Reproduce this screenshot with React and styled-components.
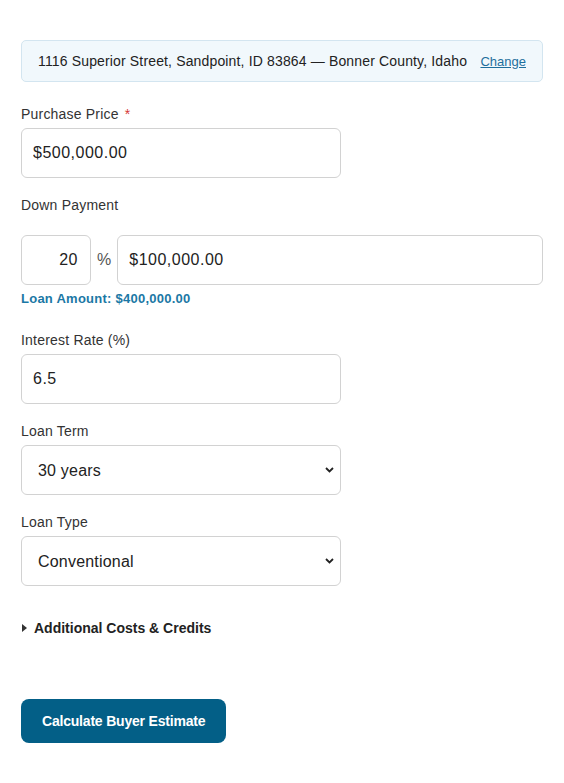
import React from 'react';
import styled, { createGlobalStyle } from 'styled-components';

const GlobalStyle = createGlobalStyle`
  body {
    margin: 0;
    background: #ffffff;
    font-family: 'Liberation Sans', Arial, sans-serif;
    color: #222222;
  }
`;

const Page = styled.div`
  padding: 40px 21px 40px 21px;
  width: 522px;
`;

const AddressBox = styled.div`
  display: flex;
  align-items: center;
  justify-content: space-between;
  height: 40px;
  padding: 0 16px;
  background: #f1f8fc;
  border: 1px solid #d3e5f0;
  border-radius: 5px;
  margin-bottom: 23px;
  font-size: 14px;
  letter-spacing: 0.15px;
  color: #222222;
`;

const ChangeLink = styled.a`
  font-size: 13px;
  letter-spacing: 0;
  color: #1f6f9d;
  text-decoration: underline;
  cursor: pointer;
`;

const Field = styled.div`
  margin-bottom: ${(p) => p.$after || 18}px;
`;

const Label = styled.div`
  font-size: 14px;
  line-height: 18px;
  letter-spacing: 0.2px;
  color: #333333;
  margin-bottom: ${(p) => p.$gap || 5}px;
`;

const Required = styled.span`
  color: #d63638;
  margin-left: 6px;
`;

const TextInput = styled.input`
  box-sizing: border-box;
  display: block;
  width: ${(p) => p.$width || '320px'};
  height: 50px;
  padding: 0 ${(p) => (p.$right ? '12px' : '11px')};
  border: 1px solid #d2d2d2;
  border-radius: 6px;
  font-family: inherit;
  font-size: 16px;
  letter-spacing: 0.5px;
  color: #222222;
  text-align: ${(p) => (p.$right ? 'right' : 'left')};
  background: #ffffff;
  outline: none;
`;

const PaymentRow = styled.div`
  display: flex;
  align-items: center;
  gap: 6px;

  & > input:last-child {
    flex: 1;
  }
`;

const Percent = styled.span`
  font-size: 16px;
  color: #555555;
`;

const LoanAmount = styled.div`
  margin-top: 6px;
  font-size: 13px;
  line-height: 15px;
  letter-spacing: 0.25px;
  font-weight: bold;
  color: #1b78a5;
`;

const SelectWrap = styled.div`
  position: relative;
  width: 320px;
`;

const Select = styled.select`
  box-sizing: border-box;
  display: block;
  width: 100%;
  height: 50px;
  padding: 0 16px;
  appearance: none;
  -webkit-appearance: none;
  border: 1px solid #d2d2d2;
  border-radius: 6px;
  background: #ffffff;
  font-family: inherit;
  font-size: 16px;
  letter-spacing: 0.2px;
  color: #222222;
  outline: none;
`;

const Chevron = styled.svg`
  position: absolute;
  right: 7px;
  top: 50%;
  width: 9px;
  height: 6px;
  margin-top: -3px;
  pointer-events: none;
`;

const Details = styled.details`
  margin-top: 33px;
  margin-bottom: 62px;
`;

const Summary = styled.summary`
  display: flex;
  align-items: center;
  list-style: none;
  font-size: 14px;
  line-height: 18px;
  font-weight: bold;
  color: #222222;
  cursor: pointer;

  &::-webkit-details-marker {
    display: none;
  }

  &::before {
    content: '';
    width: 0;
    height: 0;
    margin: 0 7px 0 1px;
    border-top: 4px solid transparent;
    border-bottom: 4px solid transparent;
    border-left: 5px solid #333333;
  }
`;

const SubmitButton = styled.button`
  height: 44px;
  padding: 0 21px;
  border: none;
  border-radius: 8px;
  background: #035f87;
  color: #ffffff;
  font-family: inherit;
  font-size: 14px;
  letter-spacing: -0.2px;
  font-weight: bold;
  cursor: pointer;
`;

const SelectField = ({ label, value, options }) => (
  <Field>
    <Label>{label}</Label>
    <SelectWrap>
      <Select defaultValue={value}>
        {options.map((o) => (
          <option key={o}>{o}</option>
        ))}
      </Select>
      <Chevron viewBox='0 0 9 6'>
        <path d='M1 1 L4.5 4.5 L8 1' fill='none' stroke='#222' strokeWidth='1.8' />
      </Chevron>
    </SelectWrap>
  </Field>
);

const App = () => {
  return (
    <Page>
      <GlobalStyle />
      <AddressBox>
        <span>1116 Superior Street, Sandpoint, ID 83864 — Bonner County, Idaho</span>
        <ChangeLink>Change</ChangeLink>
      </AddressBox>

      <Field>
        <Label>
          Purchase Price<Required>*</Required>
        </Label>
        <TextInput defaultValue='$500,000.00' />
      </Field>

      <Field $after={25}>
        <Label $gap={21}>Down Payment</Label>
        <PaymentRow>
          <TextInput $width='70px' $right defaultValue='20' />
          <Percent>%</Percent>
          <TextInput $width='auto' defaultValue='$100,000.00' />
        </PaymentRow>
        <LoanAmount>Loan Amount: $400,000.00</LoanAmount>
      </Field>

      <Field>
        <Label>Interest Rate (%)</Label>
        <TextInput defaultValue='6.5' />
      </Field>

      <SelectField
        label='Loan Term'
        value='30 years'
        options={['10 years', '15 years', '20 years', '30 years']}
      />
      <SelectField
        label='Loan Type'
        value='Conventional'
        options={['Conventional', 'FHA', 'VA', 'USDA', 'Cash']}
      />

      <Details>
        <Summary>Additional Costs &amp; Credits</Summary>
      </Details>

      <SubmitButton>Calculate Buyer Estimate</SubmitButton>
    </Page>
  );
};

export default App;
